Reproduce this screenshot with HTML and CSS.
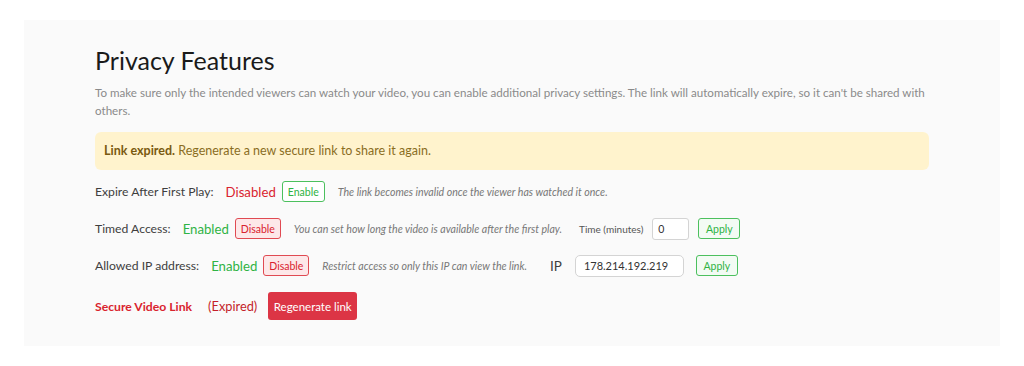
FILE: index.html
```html
<!DOCTYPE html>
<html lang="en">

<head>
  <meta charset="UTF-8">
  <meta name="viewport" content="width=device-width, initial-scale=1.0">
  <title>Privacy Features</title>
  <link rel="stylesheet" href="styles.css">
</head>

<body>
  <section class="privacy">
    <h1>Privacy Features</h1>
    <p class="intro">
      To make sure only the intended viewers can watch your video, you can enable additional privacy settings. The link will automatically expire, so it can't be shared with others.
    </p>

    <div class="alert">
      <strong>Link expired.</strong> Regenerate a new secure link to share it again.
    </div>

    <div class="row">
      <span class="label">Expire After First Play:</span>
      <span class="status off">Disabled</span>
      <button class="btn btn-enable">Enable</button>
      <span class="note">The link becomes invalid once the viewer has watched it once.</span>
    </div>

    <div class="row">
      <span class="label">Timed Access:</span>
      <span class="status on">Enabled</span>
      <button class="btn btn-disable">Disable</button>
      <span class="note">You can set how long the video is available after the first play.</span>
      <span class="field-label">Time (minutes)</span>
      <input class="field field-time" type="number" value="0">
      <button class="btn btn-apply">Apply</button>
    </div>

    <div class="row">
      <span class="label">Allowed IP address:</span>
      <span class="status on">Enabled</span>
      <button class="btn btn-disable">Disable</button>
      <span class="note">Restrict access so only this IP can view the link.</span>
      <span class="ip-label">IP</span>
      <input class="field field-ip" type="text" value="178.214.192.219">
      <button class="btn btn-apply">Apply</button>
    </div>

    <div class="row row-link">
      <span class="link-title">Secure Video Link</span>
      <span class="link-state">(Expired)</span>
      <button class="btn btn-regen">Regenerate link</button>
    </div>
  </section>
</body>

</html>
```

FILE: styles.css
```css
* {
  margin: 0;
  padding: 0;
  box-sizing: border-box;
  font-family: 'Lato', 'Noto Sans', sans-serif;
}

body {
  background: #ffffff;
  color: #3a3a3a;
}

.privacy {
  margin: 20px 24px;
  min-height: 326px;
  background: #fafafa;
  padding: 24px 71px 20px;
}

h1 {
  font-size: 25px;
  font-weight: 400;
  color: #1a1a1a;
  line-height: 32px;
}

.intro {
  margin-top: 8px;
  font-size: 11.6px;
  line-height: 18px;
  color: #8a8a8a;
  max-width: 834px;
}

.alert {
  margin-top: 12px;
  background: #fff3cd;
  color: #8a6d1f;
  border-radius: 6px;
  padding: 11px 9px;
  font-size: 12.5px;
  line-height: 16px;
  width: 834px;
}

.alert strong {
  font-weight: 700;
  color: #7a5a10;
}

.row {
  display: flex;
  align-items: center;
  margin-top: 10px;
  height: 23px;
}

.row + .row {
  margin-top: 14px;
}

.label {
  font-size: 12.2px;
  color: #3e3e3e;
  margin-right: 12px;
}

.status {
  font-size: 13.2px;
  margin-right: 6px;
}

.status.off {
  color: #d9232e;
}

.status.on {
  color: #2fb344;
}

.btn {
  font-family: 'Lato', sans-serif;
  font-size: 10.5px;
  padding: 0;
  height: 21px;
  border-radius: 3px;
  cursor: pointer;
  background: #ffffff;
}

.btn-enable {
  width: 43px;
  border: 1px solid #4cc05e;
  color: #2fb344;
}

.btn-apply {
  width: 42px;
  border: 1px solid #4cc05e;
  color: #2fb344;
  background: #f3fbf4;
}

.btn-disable {
  width: 46px;
  border: 1px solid #e04a52;
  color: #d9232e;
  background: #fde8e9;
}

.note {
  font-size: 10.6px;
  font-style: italic;
  color: #777777;
  margin-left: 13px;
}

.field-label {
  font-size: 10px;
  color: #555555;
  margin-left: 17px;
}

.field {
  font-family: 'Lato', sans-serif;
  font-size: 10.5px;
  color: #333333;
  border: 1px solid #d4d4d4;
  border-radius: 3px;
  background: #ffffff;
  height: 22px;
  padding: 0 5px;
  outline: none;
}

.field-time {
  width: 37px;
  margin-left: 9px;
  -moz-appearance: textfield;
}

.field-time::-webkit-outer-spin-button,
.field-time::-webkit-inner-spin-button {
  -webkit-appearance: none;
}

.field-ip {
  width: 109px;
  margin-left: 13px;
  border-radius: 5px;
  padding: 0 8px;
  font-size: 11px;
}

.ip-label {
  font-size: 13.5px;
  color: #3e3e3e;
  margin-left: 23px;
}

.field + .btn-apply {
  margin-left: 9px;
}

.field-ip + .btn-apply {
  margin-left: 12px;
}

.row-link {
  height: 28px;
}

.row + .row-link {
  margin-top: 15px;
}

.link-title {
  font-size: 12.2px;
  font-weight: 700;
  color: #d9232e;
}

.link-state {
  font-size: 12.8px;
  color: #c41f2a;
  margin-left: 16px;
}

.btn-regen {
  margin-left: 11px;
  width: 89px;
  height: 28px;
  border: none;
  border-radius: 3px;
  background: #dc3545;
  color: #ffffff;
  font-size: 11.5px;
}
```
